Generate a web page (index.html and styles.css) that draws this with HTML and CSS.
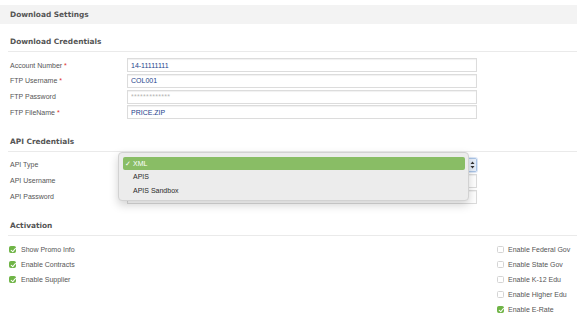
FILE: index.html
```html
<!DOCTYPE html>
<html lang="en">
<head>
  <meta charset="UTF-8" />
  <title>Download Settings</title>
  <meta name="viewport" content="width=device-width, initial-scale=1.0" />
  <link rel="stylesheet" href="styles.css">
</head>
<body>
  <div class="page">
    <div class="panel-head">Download Settings</div>

    <!-- Download credentials -->
    <section class="group group-first">
      <h3>Download Credentials</h3>
      <div class="fields">
        <label>Account Number <span class="req">*</span></label>
        <input class="field" type="text" value="14-11111111" readonly />
        <label>FTP Username <span class="req">*</span></label>
        <input class="field" type="text" value="COL001" readonly />
        <label>FTP Password</label>
        <input class="field field-masked" type="text" value="*************" readonly />
        <label>FTP FileName <span class="req">*</span></label>
        <input class="field" type="text" value="PRICE.ZIP" readonly />
      </div>
    </section>

    <!-- API credentials -->
    <section class="group">
      <h3>API Credentials</h3>
      <div class="fields fields-api">
        <label>API Type</label>
        <div class="select-wrap">
          <div class="select">
            <span class="stepper">
              <svg width="5" height="8" viewBox="0 0 5 8"><path d="M2.5 0.5 L4.5 3 L0.5 3 Z M2.5 7.5 L4.5 5 L0.5 5 Z" fill="#333"/></svg>
            </span>
          </div>
          <ul class="menu">
            <li class="menu-item active"><span class="tick">✓</span>XML</li>
            <li class="menu-item">APIS</li>
            <li class="menu-item">APIS Sandbox</li>
          </ul>
        </div>
        <label>API Username</label>
        <input class="field" type="text" value="" readonly />
        <label>API Password</label>
        <input class="field" type="text" value="" readonly />
      </div>
    </section>

    <!-- Activation -->
    <section class="group">
      <h3>Activation</h3>
      <div class="checks">
        <div class="check-col">
          <div class="check"><span class="box on"></span>Show Promo Info</div>
          <div class="check"><span class="box on"></span>Enable Contracts</div>
          <div class="check"><span class="box on"></span>Enable Supplier</div>
        </div>
        <div class="check-col check-col-right">
          <div class="check"><span class="box"></span>Enable Federal Gov</div>
          <div class="check"><span class="box"></span>Enable State Gov</div>
          <div class="check"><span class="box"></span>Enable K-12 Edu</div>
          <div class="check"><span class="box"></span>Enable Higher Edu</div>
          <div class="check"><span class="box on"></span>Enable E-Rate</div>
        </div>
      </div>
    </section>
  </div>
</body>
</html>
```

FILE: styles.css
```css
* {
  box-sizing: border-box;
  margin: 0;
  padding: 0;
}
body {
  background: #fff;
  font-family: 'Liberation Sans', Arial, sans-serif;
  font-size: 7px;
  color: #555;
  overflow: hidden;
}
.page {
  width: 577px;
  padding-top: 5px;
}
.panel-head {
  height: 19px;
  line-height: 19px;
  padding-left: 10px;
  background: #f3f3f3;
  font-family: 'DejaVu Sans', sans-serif;
  font-weight: bold;
  font-size: 7.4px;
  color: #555;
}
.group {
  margin-left: 8px;
}
.group h3 {
  margin-top: 17.5px;
  padding: 0 0 4px 2px;
  line-height: 10px;
  border-bottom: 1px solid #eaeaea;
  font-family: 'DejaVu Sans', sans-serif;
  font-weight: bold;
  font-size: 7.4px;
  color: #555;
}
.group-first h3 {
  margin-top: 13px;
}
.fields {
  display: grid;
  grid-template-columns: 119px 350px;
  grid-auto-rows: 14px;
  row-gap: 1.75px;
  margin-top: 6px;
  align-items: center;
}
.fields-api {
  row-gap: 2px;
}
.fields label {
  padding-left: 2px;
  color: #555;
}
.req {
  color: #e0302a;
}
.field {
  height: 14px;
  width: 100%;
  border: 1px solid #dcdcdc;
  box-shadow: inset 0 1px 1px rgba(0,0,0,0.06);
  padding: 0 3px;
  font-family: 'Liberation Sans', Arial, sans-serif;
  font-size: 7px;
  color: #23438c;
  background: #fff;
  outline: none;
}
.field-masked {
  color: #b5b5b5;
  letter-spacing: 0.3px;
}
.select-wrap {
  position: relative;
  height: 14px;
}
.select {
  height: 14px;
  border: 1px solid #a9c4e6;
  border-radius: 2px;
  box-shadow: 0 0 0 1px rgba(120,160,220,0.25);
  background: #fff;
  display: flex;
  justify-content: flex-end;
}
.stepper {
  width: 7px;
  display: flex;
  align-items: center;
  justify-content: center;
  background: #e6eef9;
}
.menu {
  position: absolute;
  left: -9px;
  top: -6px;
  width: 351px;
  list-style: none;
  padding: 4px 3px 2px 4px;
  background: #ececec;
  border: 1px solid #d2d2d2;
  border-radius: 4px;
  box-shadow: 0 4px 10px rgba(0,0,0,0.18);
}
.menu-item {
  height: 14px;
  line-height: 14px;
  padding-left: 10px;
  color: #2a2a2a;
  font-size: 7px;
}
.menu-item.active {
  height: 13px;
  line-height: 13px;
  background: #89bd65;
  border-radius: 2px;
  color: #fff;
}
.tick {
  display: inline-block;
  width: 8px;
  margin-left: -8px;
}
.checks {
  display: grid;
  grid-template-columns: 1fr 81px;
  margin-top: 6px;
}
.check-col {
  padding-left: 1px;
}
.check {
  height: 15px;
  display: flex;
  align-items: center;
  gap: 5px;
  color: #555;
}
.check-col-right .check {
  gap: 4px;
}
.box {
  width: 7px;
  height: 7px;
  border: 1px solid #d4d4d4;
  border-radius: 1.5px;
  background: #fff;
  position: relative;
}
.box.on {
  background: #6fb446;
  border-color: #6fb446;
}
.box.on::after {
  content: "";
  position: absolute;
  left: 1.5px;
  top: 0;
  width: 2px;
  height: 3.5px;
  border: solid #fff;
  border-width: 0 1px 1px 0;
  transform: rotate(40deg);
}
```
